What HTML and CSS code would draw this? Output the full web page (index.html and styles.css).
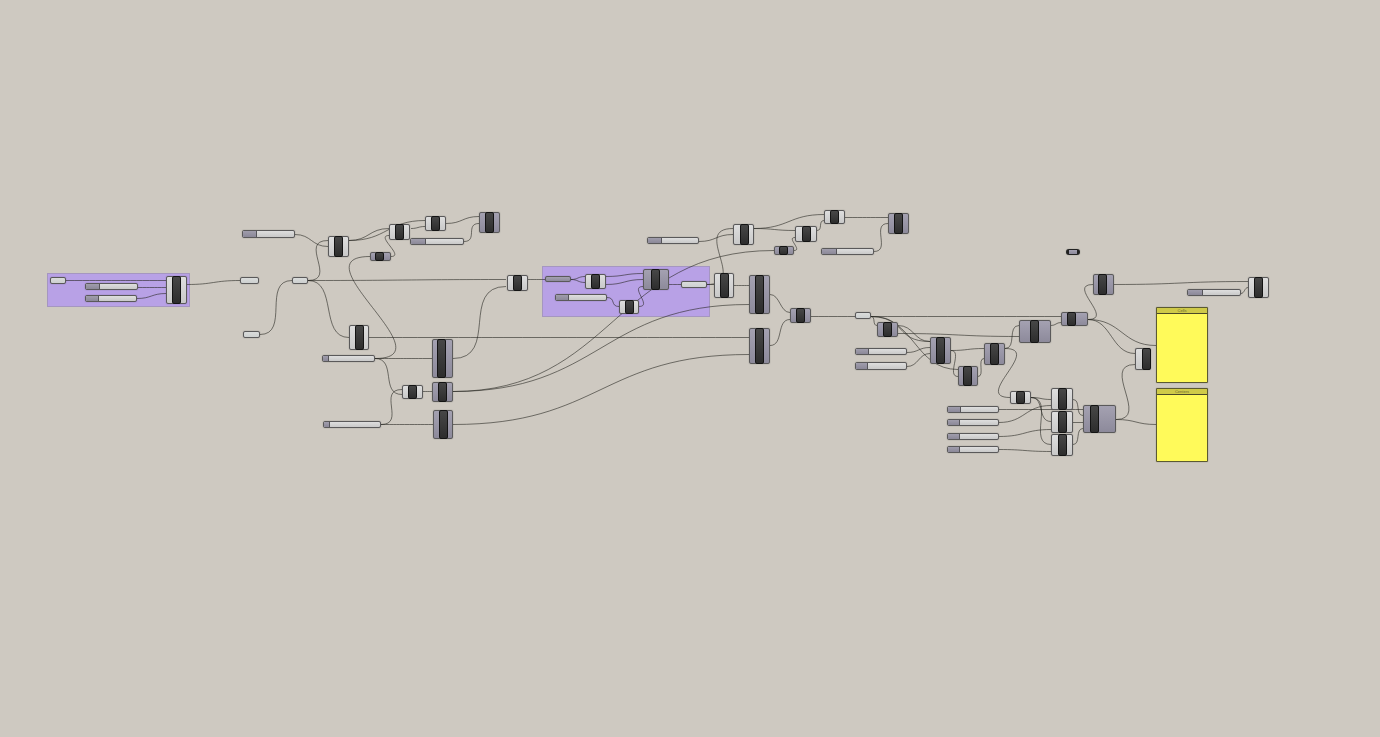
FILE: index.html
```
<!DOCTYPE html>
<html lang="en">
<head>
<meta charset="utf-8">
<title>Node canvas</title>
<link rel="stylesheet" href="styles.css">
</head>
<body>
<main class="canvas" id="canvas">
  <svg class="wires" id="wires" aria-hidden="true"></svg>
</main>
<script src="graph.js"></script>
</body>
</html>
```
FILE: styles.css
```
body {
  margin: 0;
  background: #cec9c1;
  font-family: "Liberation Sans", Arial, sans-serif;
}
.canvas {
  position: relative;
  min-height: 100vh;
  overflow: hidden;
}
.wires {
  position: absolute;
  inset: 0;
  width: 100%;
  height: 100%;
  fill: none;
  stroke: rgba(35, 35, 30, 0.58);
  stroke-width: 1;
}
.item {
  position: absolute;
  box-sizing: border-box;
}
.group {
  background: #b8a1e6;
  border: 1px solid #a596c0;
}
.node {
  border: 1px solid #5a595a;
  border-radius: 2px;
  background: linear-gradient(#dedede, #c9c9c9);
  box-shadow: 0 0 1px rgba(40, 40, 40, 0.6);
}
.relay {
  background: linear-gradient(#dadcdb, #cdd0d0);
}
.dark {
  background: linear-gradient(#a4a1b1, #8d8a9b);
}
.bar {
  position: absolute;
  box-sizing: border-box;
  top: -1px;
  bottom: -1px;
  border: 1px solid #131313;
  border-radius: 2px;
  background: linear-gradient(#474747, #2d2d2d);
}
.torn {
  border-right: 1px dotted #77756f;
}
.pill {
  border-color: #222;
  border-width: 1px 3px;
  border-radius: 3px;
}
.slider {
  display: flex;
  overflow: hidden;
}
.cap {
  box-sizing: border-box;
  flex: none;
  background: linear-gradient(#a09dac, #8b8898);
  border-right: 1px solid #555459;
}
.range {
  appearance: none;
  flex: 1;
  min-width: 0;
  height: auto;
  margin: 0;
  background: transparent;
}
.range::-webkit-slider-thumb {
  appearance: none;
  width: 1px;
  height: 1px;
  opacity: 0;
}
.panel {
  display: flex;
  flex-direction: column;
  border: 1px solid #5b5932;
  border-radius: 1px;
  background: #fffa5a;
  box-shadow: 0 0 1px rgba(40, 40, 40, 0.6);
}
.title {
  margin: 0;
  height: 5px;
  background: #cfca48;
  border-bottom: 1px solid #4a4828;
  color: #6b6730;
  font-size: 4px;
  line-height: 5px;
  font-weight: normal;
  text-align: center;
}
```
FILE: graph.js
```
const canvas = document.getElementById("canvas");
const wires = document.getElementById("wires");

function box(tag, cls, x, y, w, h) {
  const el = document.createElement(tag);
  el.className = "item " + cls;
  el.style.left = x + "px";
  el.style.top = y + "px";
  el.style.width = w + "px";
  el.style.height = h + "px";
  return el;
}

// x, y, width, height
const groups = [[47, 273, 143, 34], [542, 266, 168, 51]];

// x, y, width, height, bar offset, class
const components = [
  [166, 276, 21, 28, 6, ""], [328, 236, 21, 21, 6, ""],
  [370, 252, 21, 9, 5, "dark"], [389, 224, 21, 16, 6, ""],
  [425, 216, 21, 15, 6, ""], [479, 212, 21, 21, 6, "dark"],
  [507, 275, 21, 16, 6, ""], [349, 325, 20, 25, 6, ""],
  [432, 339, 21, 39, 5, "dark"], [402, 385, 21, 14, 6, ""],
  [432, 382, 21, 20, 6, "dark"], [433, 410, 20, 29, 6, "dark"],
  [585, 274, 21, 15, 6, ""], [643, 269, 26, 21, 8, "dark"],
  [619, 300, 20, 14, 6, ""], [714, 273, 20, 25, 6, ""],
  [733, 224, 21, 21, 7, ""], [774, 246, 20, 9, 5, "dark"],
  [795, 226, 22, 16, 7, ""], [824, 210, 21, 14, 6, ""],
  [888, 213, 21, 21, 6, "dark"], [749, 275, 21, 39, 6, "dark"],
  [749, 328, 21, 36, 6, "dark"], [790, 308, 21, 15, 6, "dark"],
  [877, 322, 21, 15, 6, "dark"], [930, 337, 21, 27, 6, "dark"],
  [984, 343, 21, 22, 6, "dark"], [958, 366, 20, 20, 5, "dark"],
  [1010, 391, 21, 13, 6, ""], [1051, 388, 22, 22, 7, ""],
  [1051, 411, 22, 22, 7, ""], [1051, 434, 22, 22, 7, ""],
  [1083, 405, 33, 28, 7, "dark"], [1093, 274, 21, 21, 5, "dark"],
  [1061, 312, 27, 14, 6, "dark"], [1019, 320, 32, 23, 11, "dark"],
  [1135, 348, 16, 22, 7, "torn"], [1248, 277, 21, 21, 6, ""]
];

const relays = [
  [50, 277, 16, 7, ""], [240, 277, 19, 7, ""], [243, 331, 17, 7, ""],
  [292, 277, 16, 7, ""], [545, 276, 26, 6, "dark"], [681, 281, 26, 7, ""],
  [855, 312, 16, 7, ""], [1066, 249, 14, 6, "dark pill"]
];

// x, y, width, height, cap width
const sliders = [
  [85, 283, 53, 7, 14], [85, 295, 52, 7, 13], [242, 230, 53, 8, 14],
  [410, 238, 54, 7, 15], [322, 355, 53, 7, 6], [323, 421, 58, 7, 6],
  [555, 294, 52, 7, 13], [647, 237, 52, 7, 14], [821, 248, 53, 7, 15],
  [855, 348, 52, 7, 13], [855, 362, 52, 8, 12], [947, 406, 52, 7, 13],
  [947, 419, 52, 7, 12], [947, 433, 52, 7, 12], [947, 446, 52, 7, 12],
  [1187, 289, 54, 7, 15]
];

const panels = [
  [1156, 307, 52, 76, "Cells"], [1156, 388, 52, 74, "Centers"]
];

// start x, start y, end x, end y, handle length (half the span if absent)
const links = [
  [66, 280, 166, 280], [138, 287, 166, 287], [137, 298, 166, 293],
  [187, 284, 240, 280], [260, 334, 292, 280, 30], [295, 234, 328, 246],
  [308, 280, 328, 240, 30], [308, 280, 349, 337, 30], [308, 280, 506, 279],
  [349, 240, 389, 228], [349, 240, 425, 220], [411, 228, 425, 226],
  [391, 256, 389, 235, 14], [375, 358, 370, 256, 74],
  [446, 223, 479, 216], [464, 241, 479, 223, 14], [375, 358, 432, 358],
  [375, 358, 402, 394, 22], [381, 424, 402, 389, 25],
  [423, 391, 432, 391], [381, 424, 433, 424], [453, 358, 506, 286, 46],
  [369, 337, 749, 337], [453, 391, 749, 304], [453, 391, 774, 250],
  [453, 424, 749, 354], [528, 279, 545, 279], [571, 279, 585, 276],
  [571, 279, 585, 282], [606, 276, 643, 273], [606, 284, 643, 279],
  [607, 297, 619, 306, 9], [639, 306, 643, 286, 14],
  [669, 284, 681, 284], [707, 284, 714, 284], [699, 241, 733, 234],
  [707, 284, 733, 228, 42], [754, 228, 824, 214], [754, 228, 795, 230],
  [794, 250, 795, 237, 9], [817, 230, 824, 220, 6], [845, 217, 888, 217],
  [874, 251, 888, 223, 17], [734, 285, 749, 285], [770, 294, 790, 312],
  [770, 345, 790, 319, 14], [811, 316, 855, 316], [871, 316, 1061, 316],
  [871, 316, 877, 325, 5], [871, 316, 958, 369], [898, 325, 930, 341],
  [871, 316, 930, 341, 36], [898, 333, 1019, 336],
  [907, 352, 930, 347], [907, 366, 930, 353],
  [951, 350, 984, 348], [951, 350, 958, 376, 12], [978, 376, 984, 358, 7],
  [1005, 348, 1019, 325, 12], [1005, 348, 1010, 397, 38],
  [1051, 325, 1061, 322], [1088, 319, 1093, 284, 27],
  [1088, 319, 1156, 345], [1088, 319, 1135, 353],
  [1116, 419, 1135, 364, 35], [1116, 419, 1156, 424],
  [1114, 284, 1248, 281], [1241, 293, 1248, 287],
  [1031, 397, 1051, 399], [1031, 397, 1051, 421, 14],
  [1031, 397, 1051, 444, 24], [999, 409, 1083, 409],
  [999, 422, 1051, 405], [999, 436, 1051, 429], [999, 449, 1051, 451],
  [1073, 399, 1083, 415, 8], [1073, 422, 1083, 422],
  [1073, 444, 1083, 428, 8]
];

groups.forEach(g => canvas.insertBefore(box("section", "group", ...g), wires));

links.forEach(([x1, y1, x2, y2, d = (x2 - x1) / 2]) => {
  const path = document.createElementNS("http://www.w3.org/2000/svg", "path");
  path.setAttribute("d", `M${x1} ${y1}C${x1 + d} ${y1} ${x2 - d} ${y2} ${x2} ${y2}`);
  path.setAttribute("transform", "translate(0 0.5)");
  wires.appendChild(path);
});

components.forEach(([x, y, w, h, offset, cls]) => {
  const el = box("div", "node " + cls, x, y, w, h);
  const bar = document.createElement("div");
  bar.className = "bar";
  bar.style.left = offset - 1 + "px";
  bar.style.width = "9px";
  el.appendChild(bar);
  canvas.appendChild(el);
});

relays.forEach(([x, y, w, h, cls]) => {
  canvas.appendChild(box("div", "node relay " + cls, x, y, w, h));
});

sliders.forEach(([x, y, w, h, cap], i) => {
  const el = box("div", "node slider", x, y, w, h);
  const label = document.createElement("label");
  label.className = "cap";
  label.htmlFor = "slider-" + i;
  label.style.width = cap + "px";
  const input = document.createElement("input");
  input.type = "range";
  input.className = "range";
  input.id = "slider-" + i;
  input.setAttribute("aria-label", "Slider " + (i + 1));
  el.append(label, input);
  canvas.appendChild(el);
});

panels.forEach(([x, y, w, h, name]) => {
  const el = box("article", "panel", x, y, w, h);
  const title = document.createElement("h2");
  title.className = "title";
  title.textContent = name;
  el.appendChild(title);
  canvas.appendChild(el);
});
```
